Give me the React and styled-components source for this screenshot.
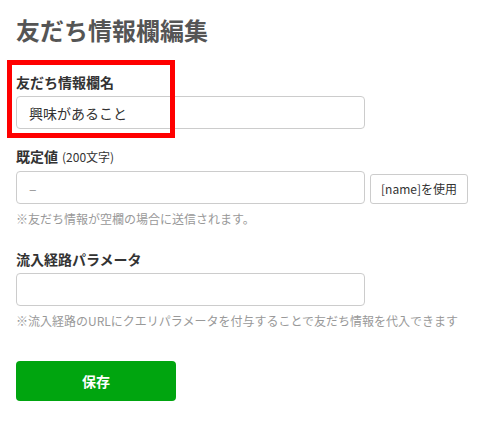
import React from 'react';
import styled, { createGlobalStyle } from 'styled-components';

const GlobalStyle = createGlobalStyle`
  body {
    margin: 0;
    background: #fff;
    font-family: "Noto Sans CJK JP", "Noto Sans", sans-serif;
    color: #333;
  }
`;

const Page = styled.div`
  padding: 12px 16px 0 16px;
  width: 500px;
  box-sizing: border-box;
`;

const Title = styled.h1`
  margin: 0;
  font-size: 24px;
  line-height: 36px;
  font-weight: 700;
  color: #555;
`;

const Field = styled.div`
  position: relative;
  margin-top: ${props => props.top || 0}px;
`;

// red annotation frame drawn over the first field
const Highlight = styled.div`
  position: absolute;
  left: -9px;
  top: -12px;
  width: 168px;
  height: 78px;
  border: 5px solid #ff0000;
  box-sizing: border-box;
  pointer-events: none;
`;

const Label = styled.div`
  font-size: 14px;
  line-height: 20px;
  font-weight: 700;
  color: #333;
  small {
    font-size: 12px;
    font-weight: 400;
    margin-left: 4px;
  }
`;

const Row = styled.div`
  display: flex;
  align-items: center;
  gap: 5px;
  margin-top: 4px;
`;

const Input = styled.input`
  width: 349px;
  height: 33px;
  box-sizing: border-box;
  border: 1px solid #ccc;
  border-radius: 4px;
  padding: 0 12px;
  font-family: inherit;
  font-size: 14px;
  color: #333;
  outline: none;
  &::placeholder {
    color: #999;
  }
`;

const SmallButton = styled.button`
  height: 30px;
  padding: 0 8px;
  border: 1px solid #ccc;
  border-radius: 3px;
  background: #fff;
  font-family: inherit;
  font-size: 12px;
  color: #333;
  margin-top: 2px;
  width: 98px;
`;

const Note = styled.div`
  margin-top: 6px;
  font-size: 12px;
  line-height: 18px;
  color: #999;
  white-space: nowrap;
`;

const SaveButton = styled.button`
  margin-top: 31px;
  width: 160px;
  height: 40px;
  border: none;
  border-radius: 4px;
  background: #00a50f;
  color: #fff;
  font-family: inherit;
  font-size: 14px;
  font-weight: 700;
`;

export default function App() {
  return (
    <Page>
      <GlobalStyle />
      <Title>友だち情報欄編集</Title>
      <Field top={24}>
        <Highlight />
        <Label>友だち情報欄名</Label>
        <Row>
          <Input defaultValue="興味があること" />
        </Row>
      </Field>
      <Field top={17}>
        <Label>
          既定値<small>(200文字)</small>
        </Label>
        <Row>
          <Input placeholder="–" />
          <SmallButton>[name]を使用</SmallButton>
        </Row>
        <Note>※友だち情報が空欄の場合に送信されます。</Note>
      </Field>
      <Field top={21}>
        <Label>流入経路パラメータ</Label>
        <Row>
          <Input />
        </Row>
        <Note>※流入経路のURLにクエリパラメータを付与することで友だち情報を代入できます</Note>
      </Field>
      <SaveButton>保存</SaveButton>
    </Page>
  );
}
